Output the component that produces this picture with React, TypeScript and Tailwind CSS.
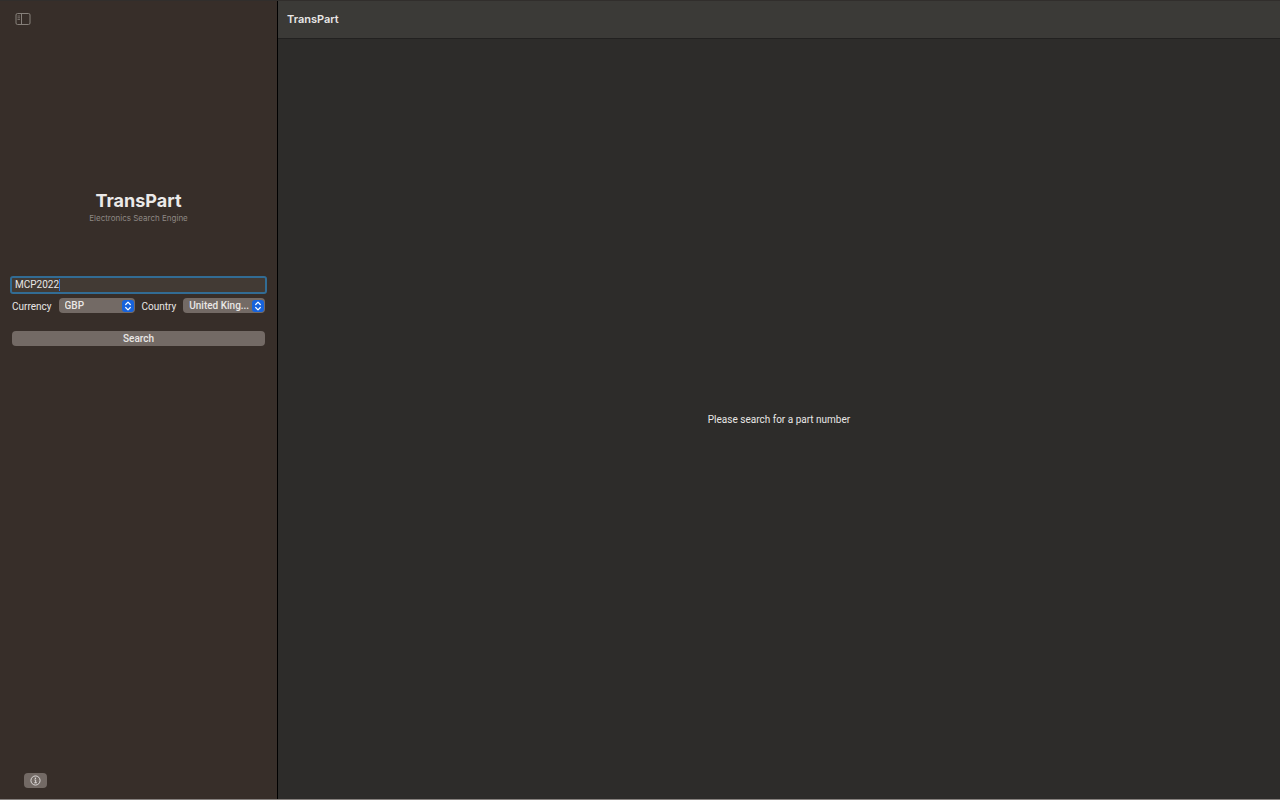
import { useState } from "react";
import type { ReactNode } from "react";

function SidebarIcon() {
    return (
        <svg viewBox="0 0 16 12" className="w-4 h-3" fill="none" stroke="#86807a">
            <rect x="1" y="0.5" width="14" height="11" rx="1.5" />
            <path d="M6.5 0.5v11" />
            <path d="M2.5 3h2.5M2.5 4.8h2.5M2.5 6.5h2.5" strokeWidth="0.8" />
        </svg>
    );
}

function InfoIcon() {
    return (
        <svg viewBox="0 0 12 12" className="w-[11px] h-[11px]" fill="none" stroke="#e6e3e1">
            <circle cx="6" cy="6" r="5" />
            <circle cx="5.9" cy="3.5" r="0.8" fill="#e6e3e1" stroke="none" />
            <path d="M4.8 5.4h1.4v3M4.6 8.5h2.9" />
        </svg>
    );
}

interface PopUpProps {
    id: string;
    label: string;
    grow: string;
    children: ReactNode;
}

function PopUp({ id, label, grow, children }: PopUpProps) {
    return (
        <>
            <label htmlFor={id} className="pt-px text-[10px] leading-[15px]">
                {label}
            </label>
            <div className={`relative min-w-0 h-[15px] ${grow}`}>
                <select
                    id={id}
                    className="block appearance-none w-full h-full pl-1.5 pr-4 rounded-[4px] bg-[#736a65] text-[10px] leading-[15px] font-medium outline-none"
                >
                    {children}
                </select>
                {/* Stepper arrows */}
                <span className="absolute right-px top-[2px] w-3 h-3 rounded-[3px] bg-[#1763dc] pointer-events-none">
                    <svg viewBox="0 0 12 12" className="w-3 h-3" fill="none" stroke="#fff" strokeLinecap="round" strokeLinejoin="round">
                        <path d="M3.7 4.5l2.3-2.3 2.3 2.3M3.7 7.5l2.3 2.3 2.3-2.3" strokeWidth="1.2" />
                    </svg>
                </span>
            </div>
        </>
    );
}

function Sidebar() {
    const [query, setQuery] = useState("MCP2022");

    return (
        <aside className="w-[278px] shrink-0 flex flex-col bg-[#372e29] border-r border-black">
            <div className="h-9 flex items-center pl-[15px]">
                <button aria-label="Toggle sidebar">
                    <SidebarIcon />
                </button>
            </div>

            <div className="pt-[153px] text-center font-['Inter','Liberation_Sans',sans-serif]">
                <h1 className="text-[18px] leading-[22px] font-bold text-[#ebe9e8]">TransPart</h1>
                <p className="text-[8px] leading-3 text-[#8e8884]">Electronics Search Engine</p>
            </div>

            <form className="mt-[54px] px-3" onSubmit={(e) => e.preventDefault()}>
                <div className="relative">
                    <input
                        type="text"
                        aria-label="Part number"
                        value={query}
                        onChange={(e) => setQuery(e.target.value)}
                        className="block w-full h-[14px] px-[3px] bg-[#423a34] text-[10px] leading-[14px] caret-transparent outline-2 outline-[#326c94] rounded-[1px]"
                    />
                    <span className="absolute left-[47px] top-px w-px h-3 bg-[#1f74e8]" />
                </div>

                <div className="mt-1.5 flex items-start gap-[7px]">
                    <PopUp id="currency" label="Currency" grow="w-[76px] shrink-0">
                        <option>GBP</option>
                    </PopUp>
                    <PopUp id="country" label="Country" grow="flex-1">
                        <option>United King...</option>
                    </PopUp>
                </div>

                <button
                    type="submit"
                    className="mt-[17px] block w-full h-[15px] rounded-[4px] bg-[#736a65] text-[10px] leading-[15px] font-medium"
                >
                    Search
                </button>
            </form>

            <div className="mt-auto pl-6 pb-[11px]">
                <button aria-label="About" className="w-[23px] h-[15px] flex items-center justify-center rounded-[4px] bg-[#736a65]">
                    <InfoIcon />
                </button>
            </div>
        </aside>
    );
}

export default function App() {
    return (
        <div className="h-screen flex font-['Roboto','Liberation_Sans',sans-serif] text-[#e9e7e6] border-t border-t-[#312e2c] border-b border-b-[#86817e] bg-[#2d2c2a]">
            <Sidebar />
            <div className="flex-1 min-w-0 flex flex-col">
                <header className="h-[38px] flex items-center px-[9px] pb-px bg-[#3b3a37] border-b border-[#222120]">
                    <h2 className="font-['Inter','Liberation_Sans',sans-serif] text-[11px] leading-4 font-semibold">TransPart</h2>
                </header>
                <main className="flex-1 flex items-center justify-center pt-0.5">
                    <p className="text-[10px] leading-4">Please search for a part number</p>
                </main>
            </div>
        </div>
    );
}
